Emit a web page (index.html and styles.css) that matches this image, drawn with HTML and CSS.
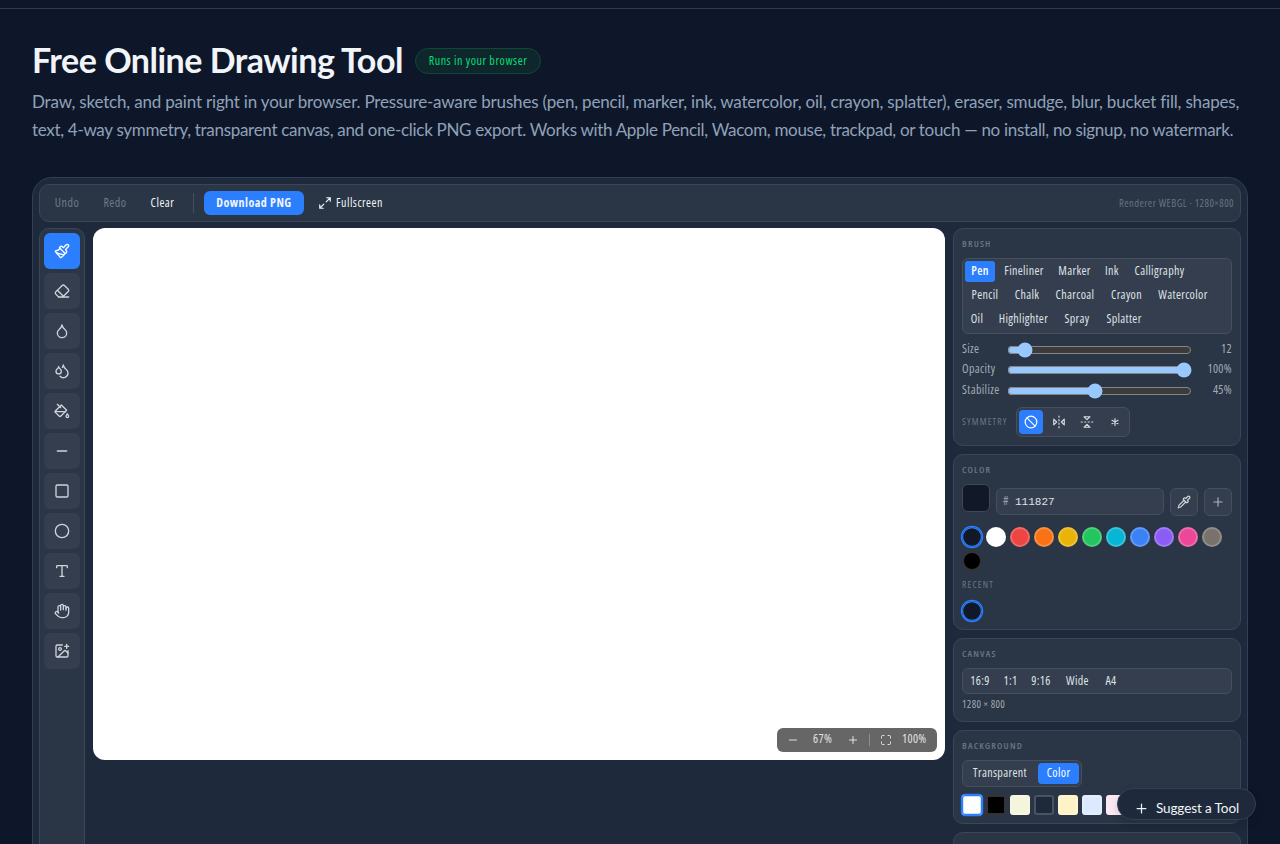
FILE: index.html
```html
<!DOCTYPE html>
<html lang="en">
<head>
<meta charset="utf-8">
<title>Free Online Drawing Tool</title>
<link rel="stylesheet" href="styles.css">
</head>
<body>
<div class="site-bar"></div>
<main class="page">
  <header class="intro">
    <div class="title-row">
      <h1>Free Online Drawing Tool</h1>
      <span class="badge">Runs in your browser</span>
    </div>
    <p><span class="line l1">Draw, sketch, and paint right in your browser. Pressure-aware brushes (pen, pencil, marker, ink, watercolor, oil, crayon, splatter), eraser, smudge, blur, bucket fill, shapes,</span> <span class="line l2">text, 4-way symmetry, transparent canvas, and one-click PNG export. Works with Apple Pencil, Wacom, mouse, trackpad, or touch — no install, no signup, no watermark.</span></p>
  </header>

  <section class="app">
    <div class="topbar">
      <button class="tb muted undo">Undo</button>
      <button class="tb muted redo">Redo</button>
      <button class="tb clear">Clear</button>
      <i class="sep"></i>
      <button class="tb primary">Download PNG</button>
      <button class="tb full"><svg class="ic s14" viewBox="0 0 24 24"><path d="M15 3h6v6M21 3l-7 7M3 21l7-7M9 21H3v-6"/></svg>Fullscreen</button>
      <span class="status">Renderer WEBGL · 1280×800</span>
    </div>

    <div class="work">
      <nav class="rail">
        <button class="tool on"><svg class="ic" viewBox="0 0 24 24"><path d="m14.622 17.897-10.68-2.913"/><path d="M18.376 2.622a1 1 0 1 1 3.002 3.002L17.36 9.643a.5.5 0 0 0 0 .707l.944.944a2.41 2.41 0 0 1 0 3.408l-.944.944a.5.5 0 0 1-.707 0L8.354 7.348a.5.5 0 0 1 0-.707l.944-.944a2.41 2.41 0 0 1 3.408 0l.944.944a.5.5 0 0 0 .707 0z"/><path d="M9 8c-1.804 2.71-3.97 3.46-6.583 3.948a.507.507 0 0 0-.302.819l7.32 8.883a1 1 0 0 0 1.185.204C12.735 20.405 16 16.792 16 15"/></svg></button>
        <button class="tool"><svg class="ic" viewBox="0 0 24 24"><path d="m7 21-4.3-4.3c-1-1-1-2.5 0-3.4l9.6-9.6c1-1 2.5-1 3.4 0l5.6 5.6c1 1 1 2.5 0 3.4L13 21"/><path d="M22 21H7M5 11l9 9"/></svg></button>
        <button class="tool"><svg class="ic" viewBox="0 0 24 24"><path d="M12 22a7 7 0 0 0 7-7c0-2-1-3.9-3-5.5s-3.5-4-4-6.5c-.5 2.5-2 4.9-4 6.5C6 11.1 5 13 5 15a7 7 0 0 0 7 7z"/></svg></button>
        <button class="tool"><svg class="ic" viewBox="0 0 24 24"><path d="M7 16.3c2.2 0 4-1.83 4-4.05 0-1.16-.57-2.26-1.71-3.19S7.29 6.75 7 5.3c-.29 1.45-1.14 2.84-2.29 3.76S3 11.1 3 12.25c0 2.22 1.8 4.05 4 4.05z"/><path d="M12.56 6.6A10.97 10.97 0 0 0 14 3.02c.5 2.5 2 4.9 4 6.5s3 3.5 3 5.5a6.98 6.98 0 0 1-11.91 4.97"/></svg></button>
        <button class="tool"><svg class="ic" viewBox="0 0 24 24"><path d="m19 11-8-8-8.6 8.6a2 2 0 0 0 0 2.8l5.2 5.2c.8.8 2 .8 2.8 0L19 11Z"/><path d="m5 2 5 5M2 13h15"/><path d="M22 20a2 2 0 1 1-4 0c0-1.6 1.7-2.4 2-4 .3 1.6 2 2.4 2 4Z"/></svg></button>
        <button class="tool"><svg class="ic" viewBox="0 0 24 24"><path d="M5 12h14"/></svg></button>
        <button class="tool"><svg class="ic" viewBox="0 0 24 24"><rect x="3" y="3" width="18" height="18" rx="2"/></svg></button>
        <button class="tool"><svg class="ic" viewBox="0 0 24 24"><circle cx="12" cy="12" r="10"/></svg></button>
        <button class="tool"><svg class="ic" viewBox="0 0 24 24"><path d="M12 4v16M4 7V5a1 1 0 0 1 1-1h14a1 1 0 0 1 1 1v2M9 20h6"/></svg></button>
        <button class="tool"><svg class="ic" viewBox="0 0 24 24"><path d="M18 11V6a2 2 0 0 0-4 0M14 10V4a2 2 0 0 0-4 0v2M10 10.500V6a2 2 0 0 0-4 0v8"/><path d="M18 8a2 2 0 1 1 4 0v6a8 8 0 0 1-8 8h-2c-2.8 0-4.5-.86-5.990-2.340l-3.600-3.600a2 2 0 0 1 2.830-2.820L7 15"/></svg></button>
        <button class="tool"><svg class="ic" viewBox="0 0 24 24"><path d="M16 5h6M19 2v6M21 11.500V19a2 2 0 0 1-2 2H5a2 2 0 0 1-2-2V5a2 2 0 0 1 2-2h7.500"/><path d="m21 15-3.086-3.086a2 2 0 0 0-2.828 0L6 21"/><circle cx="9" cy="9" r="2"/></svg></button>
      </nav>

      <div class="stage">
        <div class="canvas">
          <div class="zoom">
            <svg class="ic s12 z1" viewBox="0 0 24 24"><path d="M5 12h14"/></svg>
            <span class="zt">67%</span>
            <svg class="ic s12" viewBox="0 0 24 24"><path d="M5 12h14M12 5v14"/></svg>
            <i></i>
            <svg class="ic s12" viewBox="0 0 24 24"><path d="M8 3H5a2 2 0 0 0-2 2v3M21 8V5a2 2 0 0 0-2-2h-3M3 16v3a2 2 0 0 0 2 2h3M16 21h3a2 2 0 0 0 2-2v-3"/></svg>
            <span class="zf">100%</span>
          </div>
        </div>
      </div>

      <aside class="side">
        <section class="panel p-brush">
          <h2>BRUSH</h2>
          <div class="pills brushes">
            <div class="prow"><button class="on w30">Pen</button><button class="w50">Fineliner</button><button class="w43">Marker</button><button class="w24">Ink</button><button class="w63">Calligraphy</button></div>
            <div class="prow"><button class="w40">Pencil</button><button class="w36">Chalk</button><button class="w52">Charcoal</button><button class="w43">Crayon</button><button class="w62">Watercolor</button></div>
            <div class="prow"><button class="w24">Oil</button><button class="w61">Highlighter</button><button class="w38">Spray</button><button class="w48">Splatter</button></div>
          </div>
          <div class="sliders">
            <label><span>Size</span><input type="range" min="1" max="200" value="13"><b>12</b></label>
            <label><span>Opacity</span><input type="range" value="100"><b>100%</b></label>
            <label><span>Stabilize</span><input type="range" min="0" max="95" value="45"><b>45%</b></label>
          </div>
          <div class="sym">
            <h3>SYMMETRY</h3>
            <div class="symgroup">
              <button class="on"><svg class="ic s14" viewBox="0 0 24 24"><circle cx="12" cy="12" r="10"/><path d="m4.900 4.900 14.200 14.200"/></svg></button>
              <button><svg class="ic s14" viewBox="0 0 24 24"><path d="m3 7 5 5-5 5V7M21 7l-5 5 5 5V7M12 20v2M12 14v2M12 8v2M12 2v2"/></svg></button>
              <button><svg class="ic s14" viewBox="0 0 24 24"><path d="m17 3-5 5-5-5h10M17 21l-5-5-5 5h10M4 12H2M10 12H8M16 12h-2M22 12h-2"/></svg></button>
              <button><svg class="ic s14" viewBox="0 0 24 24"><path d="M12 6v12M17.196 9 6.804 15M6.804 9l10.392 6"/></svg></button>
            </div>
          </div>
        </section>

        <section class="panel p-color">
          <h2>COLOR</h2>
          <div class="hexrow">
            <i class="current"></i>
            <div class="hex"><span>#</span><code>111827</code></div>
            <button class="sq"><svg class="ic" viewBox="0 0 24 24"><path d="m12 9-8.414 8.414A2 2 0 0 0 3 18.828v1.344a2 2 0 0 1-.586 1.414A2 2 0 0 1 3.828 21h1.344a2 2 0 0 0 1.414-.586L15 12"/><path d="m18 9 .4.4a1 1 0 1 1-3 3l-3.800-3.800a1 1 0 1 1 3-3l.4.4 3.400-3.400a1 1 0 1 1 3 3z"/><path d="m2 22 .414-.414"/></svg></button>
            <button class="sq"><svg class="ic dim" viewBox="0 0 24 24"><path d="M5 12h14M12 5v14"/></svg></button>
          </div>
          <div class="dots">
            <i class="c-ink sel"></i><i class="c-white"></i><i class="c-red"></i><i class="c-orange"></i><i class="c-yellow"></i><i class="c-green"></i><i class="c-cyan"></i><i class="c-blue"></i><i class="c-violet"></i><i class="c-pink"></i><i class="c-stone"></i><i class="c-black"></i>
          </div>
          <h3 class="recent">RECENT</h3>
          <div class="dots"><i class="c-ink sel"></i></div>
        </section>

        <section class="panel p-canvas">
          <h2>CANVAS</h2>
          <div class="pills single"><div class="prow"><button class="w30">16:9</button><button class="w23">1:1</button><button class="w30">9:16</button><button class="w35">Wide</button><button class="w24">A4</button></div></div>
          <p class="dims">1280 × 800</p>
        </section>

        <section class="panel p-bg">
          <h2>BACKGROUND</h2>
          <div class="seg"><button class="w70">Transparent</button><button class="on w41">Color</button></div>
          <div class="dots squares"><i class="c-white sel"></i><i class="c-black"></i><i class="c-beige"></i><i class="c-slate"></i><i class="c-cream"></i><i class="c-sky"></i><i class="c-rose"></i></div>
        </section>

        <section class="panel p-more"></section>
      </aside>
    </div>
  </section>
</main>
<button class="suggest"><svg class="ic" viewBox="0 0 24 24"><path d="M5 12h14M12 5v14"/></svg>Suggest a Tool</button>
</body>
</html>
```
FILE: styles.css
```css
* { box-sizing: border-box; }
html { color-scheme: dark; }
body {
  margin: 0; height: 844px; overflow: hidden; background: #0e1729; color: #f1f5f9;
  font-family: "Open Sans", "Noto Sans", sans-serif; font-size: 12px; font-stretch: 75%; letter-spacing: .35px;
}
h1, h2, h3, p { margin: 0; }
button { font: inherit; letter-spacing: inherit; color: inherit; border: 0; background: none; padding: 0; display: flex; align-items: center; justify-content: center; white-space: nowrap; }
.ic { width: 16px; height: 16px; flex: none; fill: none; stroke: currentColor; stroke-width: 2; stroke-linecap: round; stroke-linejoin: round; }
.s14 { width: 14px; height: 14px; }
.s12 { width: 12px; height: 12px; }

.site-bar { height: 9px; border-bottom: 1px solid #2d3b4e; }
.page { height: 835px; overflow: hidden; padding: 31px 32px 0; }
.intro { height: 137px; }
.title-row { display: flex; align-items: center; gap: 13px; height: 40px; }
h1 { width: 370px; font: 700 34px/40px Lato, sans-serif; letter-spacing: -.5px; white-space: nowrap; }
.badge { display: flex; align-items: center; justify-content: center; width: 126px; height: 26px; margin-top: 2px; padding-bottom: 1px; border: 1px solid #0c4a36; border-radius: 13px; background: #0f262d; color: #05df72; letter-spacing: .55px; }
.intro p { margin-top: 8px; color: #90a1b9; font: 17px/28px Lato, sans-serif; letter-spacing: -.18px; }
.line { display: block; white-space: nowrap; }
.l2 { letter-spacing: -.305px; }

.app { height: 760px; padding: 6px; border: 1px solid #314052; border-radius: 20px; background: #1e293b; }
.topbar { display: flex; align-items: center; height: 38px; padding: 0 6px 0 14px; border: 1px solid #3b4756; border-radius: 10px; background: #2a3545; }
.tb { height: 24px; padding-bottom: 1px; letter-spacing: .5px; }
.muted { color: #717b88; }
.undo { width: 26px; margin-right: 22px; }
.redo { width: 26px; margin-right: 21px; }
.clear { width: 27px; }
.sep { width: 1px; height: 20px; margin: 0 10px 0 17px; background: #434d5b; }
.primary { width: 100px; border-radius: 6px; background: #2b7fff; font-weight: 700; }
.full { gap: 4px; margin-left: 14px; }
.status { margin-left: auto; padding-bottom: 1px; color: #697482; font-size: 10.5px; letter-spacing: .45px; }

.work { display: flex; gap: 8px; height: 700px; margin-top: 6px; }
.rail { display: flex; flex-direction: column; gap: 4px; width: 46px; padding: 4px; border: 1px solid #3b4756; border-radius: 10px; background: #2a3545; }
.tool { width: 36px; height: 36px; border-radius: 6px; background: #353e4e; color: #cfd4db; }
.on { background: #2b7fff; color: #fff; }
.stage { width: 852px; }
.canvas { display: flex; align-items: flex-end; justify-content: flex-end; height: 532px; padding: 8px; border-radius: 12px; background: #fff; }
.zoom { display: flex; align-items: center; width: 160px; height: 24px; padding-left: 10px; border-radius: 6px; background: #666; color: #e2e2e2; }
.zt { width: 20px; margin: 0 14px 0 14px; line-height: 22px; padding-bottom: 2px; }
.zoom i { width: 1px; height: 12px; margin: 0 10px 0 10px; background: #8e8e8e; }
.zf { margin-left: 10px; line-height: 22px; padding-bottom: 2px; }

.side { display: flex; flex-direction: column; gap: 8px; width: 288px; }
.panel { flex: none; padding: 8px; border: 1px solid #3b4756; border-radius: 10px; background: #2a3545; }
.p-brush { height: 218px; }
.p-color { height: 176px; }
.p-canvas { height: 84px; }
.p-bg { height: 94px; }
.p-more { height: 100px; }
h2, h3 { color: #6b7685; font-size: 9.5px; font-weight: 600; letter-spacing: 1.15px; line-height: 13px; }
h3 { font-weight: 400; }
.pills { margin-top: 8px; padding: 2px; border: 1px solid #454f5e; border-radius: 6px; background: #353e4e; color: #dfe3e8; }
.prow { display: flex; gap: 4px; height: 24.3px; }
.prow button { height: 21px; padding-bottom: 3px; border-radius: 3px; }
.prow .on { font-weight: 600; color: #fff; }
.brushes { height: 76px; }
.single { height: 26px; }
.w23 { width: 23px; } .w24 { width: 24px; } .w30 { width: 30px; } .w35 { width: 35px; } .w36 { width: 36px; } .w38 { width: 38px; }
.w40 { width: 40px; } .w41 { width: 41px; } .w43 { width: 43px; } .w48 { width: 48px; } .w50 { width: 50px; } .w52 { width: 52px; }
.w61 { width: 61px; } .w62 { width: 62px; } .w63 { width: 63px; } .w70 { width: 70px; }
.sliders { margin-top: 5.5px; color: #a3abb6; }
.sliders label { display: flex; align-items: center; height: 20.5px; }
.sliders span { width: 45px; padding-bottom: 3px; }
.sliders input { width: 185px; height: 16px; margin: 0; }
.sliders b { flex: 1; text-align: right; font-weight: 400; padding-bottom: 3px; }
.sym { display: flex; align-items: center; gap: 8px; margin-top: 5.5px; }
.sym h3 { width: 46px; white-space: nowrap; }
.symgroup { display: flex; gap: 4px; width: 114px; height: 30px; padding: 2px; border: 1px solid #454f5e; border-radius: 6px; background: #353e4e; }
.symgroup button { width: 24px; height: 24px; border-radius: 4px; color: #d7dbe0; }
.symgroup .on { color: #fff; }

.hexrow { display: flex; align-items: flex-start; height: 32px; margin-top: 8px; }
.current { width: 28px; height: 28px; border: 1px solid #3d4755; border-radius: 6px; background: #111827; }
.hex { display: flex; align-items: center; width: 168px; height: 27px; margin: 4px 6px 0; padding: 0 6px; border: 1px solid #454f5e; border-radius: 6px; background: #353e4e; color: #97a0ac; }
.hex span { width: 12px; padding-bottom: 3px; }
.hex code { color: #dfe3e8; font: 11px "Liberation Mono", monospace; letter-spacing: 0; }
.sq { width: 28px; height: 28px; margin-top: 4px; border: 1px solid #454f5e; border-radius: 6px; background: #353e4e; color: #cfd4db; }
.sq .ic { width: 14px; height: 14px; }
.sq + .sq { margin-left: 6px; }
.dim { color: #abb2bc; }
.dots { display: flex; flex-wrap: wrap; gap: 4px; margin-top: 11px; }
.dots i { width: 20px; height: 20px; border: 2px solid rgba(255,255,255,.2); border-radius: 50%; }
.dots .sel { border: 0; box-shadow: 0 0 0 1.2px #2b7fff inset, 0 0 0 1.2px #2b7fff; }
.recent { margin-top: 7px; }
.recent + .dots { margin-top: 10px; }
.c-ink { background: #111827; } .c-white { background: #fff; } .c-red { background: #ef4444; } .c-orange { background: #f97316; }
.c-yellow { background: #eab308; } .c-green { background: #22c55e; } .c-cyan { background: #06b6d4; } .c-blue { background: #3b82f6; }
.c-violet { background: #8b5cf6; } .c-pink { background: #ec4899; } .c-stone { background: #78716c; } .c-black { background: #000; }
.c-beige { background: #f5f5dc; } .c-slate { background: #1e293b; } .c-cream { background: #fef3c7; } .c-sky { background: #dbeafe; } .c-rose { background: #fce7f3; }
.dims { margin-top: 4px; color: #a3abb6; font-size: 10.5px; line-height: 13px; }
.seg { display: flex; width: 120px; height: 27px; margin-top: 8px; padding: 2px; gap: 3px; border: 1px solid #454f5e; border-radius: 6px; background: #353e4e; color: #dfe3e8; }
.seg button { height: 21px; padding-bottom: 3px; border-radius: 4px; }
.seg .on { color: #fff; }
.squares { margin-top: 8px; }
.squares i { border-radius: 3px; }
.suggest { position: absolute; left: 1117px; top: 788px; width: 139px; height: 32px; padding-top: 8px; gap: 7px; border: 1px solid #314052; border-radius: 16px; background: #1e293b; font: 13.5px Lato, sans-serif; letter-spacing: -.1px; box-shadow: 0 4px 8px rgba(0,0,0,.15); }
.suggest .ic { width: 15px; height: 15px; }
```
